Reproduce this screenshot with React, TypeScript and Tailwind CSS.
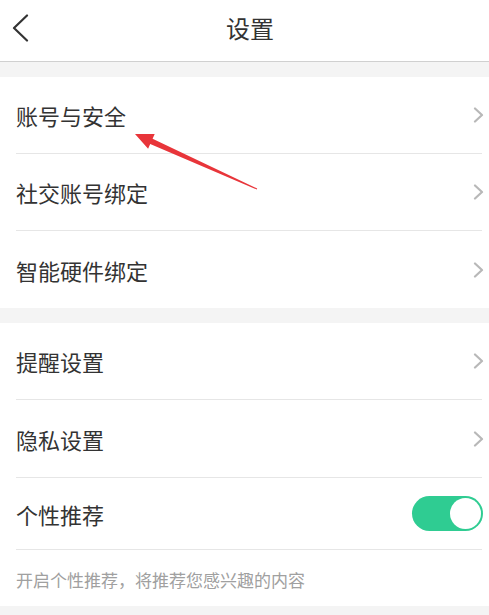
import React from "react";

const font = { fontFamily: '"Noto Sans CJK SC", "Noto Sans", sans-serif' };

function Chevron() {
  return (
    <svg width="11" height="16" viewBox="0 0 11 16" fill="none">
      <path d="M2 1.5 L9 8 L2 14.5" stroke="#b8b8b8" strokeWidth="2.2" strokeLinecap="round" strokeLinejoin="round" />
    </svg>
  );
}

function Row({ label, right, divider = true, h = "h-[77px]" }: { label: string; right?: React.ReactNode; divider?: boolean; h?: string }) {
  return (
    <div className={`${h} pl-4 flex flex-col bg-white`}>
      <div className="flex-1 flex items-center justify-between pr-[5px]">
        <span className="text-[22px] leading-none text-[#333333]">{label}</span>
        {right ?? <Chevron />}
      </div>
      {divider && <div className="h-px bg-[#e6e6e6] mr-[7px]" />}
    </div>
  );
}

function Toggle() {
  return (
    <div className="relative w-[71px] h-[35px] rounded-full bg-[#2fcc92] mr-px">
      <div className="absolute right-[2px] top-[2px] w-[31px] h-[31px] rounded-full bg-white" />
    </div>
  );
}

export default function App() {
  return (
    <div className="relative w-[489px] h-[615px] bg-[#f4f4f4] overflow-hidden" style={font}>
      <div className="h-[62px] bg-white border-b border-[#d0d0d0] flex items-center pl-3 pr-[19px] pb-[6px]">
        <svg width="18" height="28" viewBox="0 0 18 28" fill="none">
          <path d="M15 1.5 L2 14 L15 26.5" stroke="#333333" strokeWidth="2.2" strokeLinecap="round" strokeLinejoin="round" />
        </svg>
        <div className="flex-1 text-center text-[24px] leading-none text-[#333333]">设置</div>
      </div>

      <div className="mt-[15px] flex flex-col">
        <Row label="账号与安全" />
        <Row label="社交账号绑定" />
        <Row label="智能硬件绑定" divider={false} />
      </div>

      <div className="mt-[15px] flex flex-col">
        <Row label="提醒设置" />
        <Row label="隐私设置" h="h-[78px]" />
        <Row label="个性推荐" h="h-[72px]" right={<Toggle />} />
        <div className="h-[56px] bg-white px-4 pt-[2px] flex items-center text-[17px] leading-none text-[#a0a0a0]">
          开启个性推荐，将推荐您感兴趣的内容
        </div>
      </div>

      <svg className="absolute left-0 top-0 pointer-events-none" width="489" height="615" viewBox="0 0 489 615">
        <polygon
          points="135,134 154.7,134.1 152.6,138.7 257.2,188.5 256.8,189.5 150.2,144.1 148.1,148.7"
          fill="#e8353a"
        />
      </svg>
    </div>
  );
}
